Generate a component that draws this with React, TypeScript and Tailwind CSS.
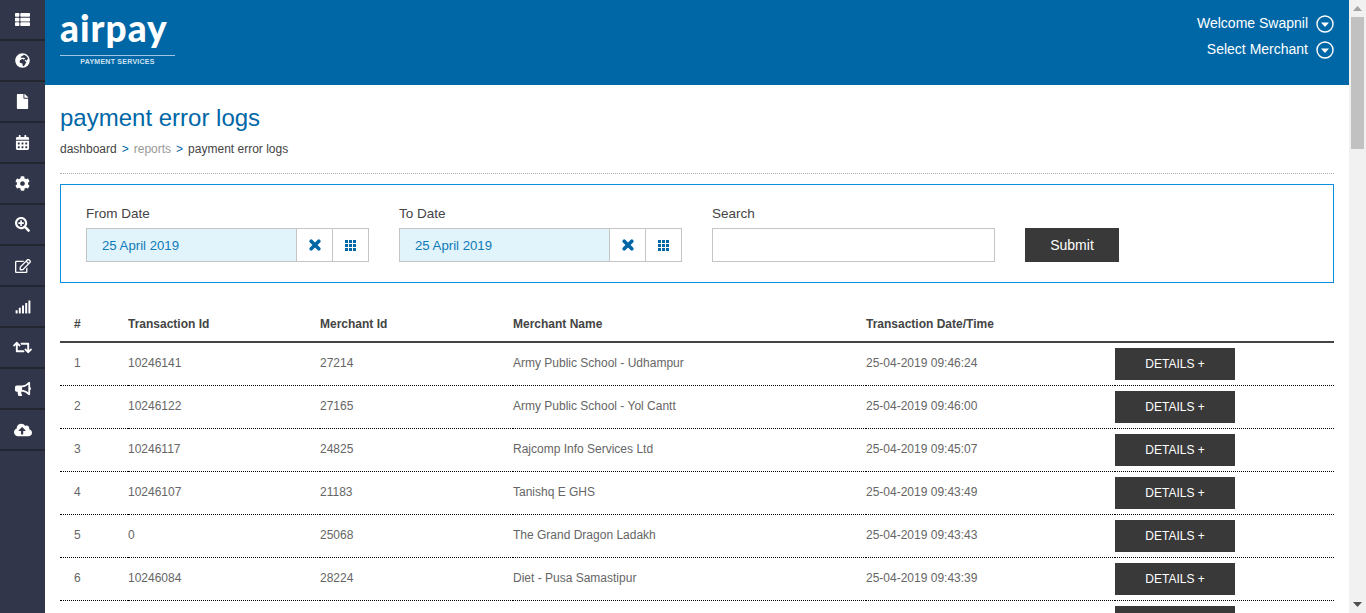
import { FaThList, FaGlobeAfrica, FaFile, FaCalendarAlt, FaCog, FaSearchPlus, FaRegEdit, FaSignal, FaRetweet, FaBullhorn, FaCloudUploadAlt } from 'react-icons/fa';

const navIcons = [
	{ Icon: FaThList, size: 15 },
	{ Icon: FaGlobeAfrica, size: 15 },
	{ Icon: FaFile, size: 15 },
	{ Icon: FaCalendarAlt, size: 15 },
	{ Icon: FaCog, size: 15 },
	{ Icon: FaSearchPlus, size: 15 },
	{ Icon: FaRegEdit, size: 16 },
	{ Icon: FaSignal, size: 16 },
	{ Icon: FaRetweet, size: 19 },
	{ Icon: FaBullhorn, size: 16 },
	{ Icon: FaCloudUploadAlt, size: 18 },
];

const rows = [
	['1', '10246141', '27214', 'Army Public School - Udhampur', '25-04-2019 09:46:24'],
	['2', '10246122', '27165', 'Army Public School - Yol Cantt', '25-04-2019 09:46:00'],
	['3', '10246117', '24825', 'Rajcomp Info Services Ltd', '25-04-2019 09:45:07'],
	['4', '10246107', '21183', 'Tanishq E GHS', '25-04-2019 09:43:49'],
	['5', '0', '25068', 'The Grand Dragon Ladakh', '25-04-2019 09:43:43'],
	['6', '10246084', '28224', 'Diet - Pusa Samastipur', '25-04-2019 09:43:39'],
	['', '', '', '', ''],
];

function CircleArrow() {
	return (
		<svg width="18" height="18" viewBox="0 0 18 18" className="shrink-0">
			<circle cx="9" cy="9" r="8" fill="none" stroke="#fff" strokeWidth="1.4" />
			<path d="M5 7.5h8L9 12z" fill="#fff" />
		</svg>
	);
}

function CrossIcon() {
	return (
		<svg width="12" height="12" viewBox="0 0 12 12">
			<path d="M2.2 2.2l7.6 7.6M9.8 2.2l-7.6 7.6" stroke="#0067a7" strokeWidth="3.6" strokeLinecap="round" />
		</svg>
	);
}

function GridIcon() {
	return (
		<svg width="11" height="11" viewBox="0 0 11 11" fill="#0067a7">
			<rect x="0" y="0" width="3" height="3" />
			<rect x="4" y="0" width="3" height="3" />
			<rect x="8" y="0" width="3" height="3" />
			<rect x="0" y="4" width="3" height="3" />
			<rect x="4" y="4" width="3" height="3" />
			<rect x="8" y="4" width="3" height="3" />
			<rect x="0" y="8" width="3" height="3" />
			<rect x="4" y="8" width="3" height="3" />
			<rect x="8" y="8" width="3" height="3" />
		</svg>
	);
}

function DateField({ label, value }: { label: string; value: string }) {
	return (
		<div className="w-[283px]">
			<div className="text-[13.5px] leading-[15px] mb-[7px] text-[#444]">{label}</div>
			<div className="flex h-[34px] border border-[#c4c4c4]">
				<div className="flex-1 bg-[#e1f4fc] text-[#0f7ab8] text-[13.2px] leading-[33px] pl-[15px]">{value}</div>
				<div className="w-[36px] flex items-center justify-center border-l border-[#c4c4c4]">
					<CrossIcon />
				</div>
				<div className="w-[36px] flex items-center justify-center border-l border-[#c4c4c4]">
					<GridIcon />
				</div>
			</div>
		</div>
	);
}

export default function App() {
	return (
		<div className="flex h-screen overflow-hidden bg-white font-['Liberation_Sans',Arial,sans-serif]">
			{/* Sidebar */}
			<div className="w-[45px] shrink-0 bg-[#31364a]">
				{navIcons.map(({ Icon, size }, i) => (
					<div key={i} className="h-[41px] flex items-center justify-center text-white border-b-2 border-[#23262f]">
						<Icon size={size} />
					</div>
				))}
			</div>

			<div className="flex-1 min-w-0 overflow-hidden">
				{/* Header */}
				<div className="h-[85px] bg-[#0067a7] flex justify-between pl-[15px] pr-[15px]">
					<div className="w-[115px] pt-[6px] text-white">
						<div className="font-['Lato',sans-serif] font-black text-[37px] leading-[44px] tracking-[1px] whitespace-nowrap">airpay</div>
						<div className="border-t border-[#9cc6e2] mt-[5px] text-center text-[7px] leading-[11px] tracking-[0.25px] text-[#cfe2ef] font-bold">PAYMENT SERVICES</div>
					</div>
					<div className="pt-[15px] text-white text-[14px]">
						<div className="flex items-center justify-end gap-[8px] h-[18px]">
							<span className="-mt-[2px]">Welcome Swapnil</span>
							<CircleArrow />
						</div>
						<div className="flex items-center justify-end gap-[8px] h-[18px] mt-[8px]">
							<span className="-mt-[2px]">Select Merchant</span>
							<CircleArrow />
						</div>
					</div>
				</div>

				<div className="px-[15px]">
					<h1 className="text-[24px] leading-[28px] text-[#0067a7] mt-[19px]">payment error logs</h1>
					<div className="text-[12px] leading-[14px] mt-[10px] text-[#444] flex gap-[5px]">
						<span>dashboard</span>
						<span className="text-[#0067a7]">&gt;</span>
						<span className="text-[#999]">reports</span>
						<span className="text-[#0067a7]">&gt;</span>
						<span>payment error logs</span>
					</div>
					<div className="border-b border-dotted border-[#aaa] mt-[17px]" />

					{/* Filters */}
					<div className="mt-[10px] h-[99px] border border-[#0a8ddb] pl-[25px] pt-[21px] flex gap-[30px]">
						<DateField label="From Date" value="25 April 2019" />
						<DateField label="To Date" value="25 April 2019" />
						<div className="w-[283px]">
							<div className="text-[13.5px] leading-[15px] mb-[7px] text-[#444]">Search</div>
							<div className="h-[34px] border border-[#c4c4c4]" />
						</div>
						<div className="pt-[22px]">
							<button className="w-[94px] h-[34px] bg-[#393939] text-white text-[14px]">Submit</button>
						</div>
					</div>

					{/* Table */}
					<table className="w-full table-fixed border-collapse mt-[22px] text-[12px]">
						<colgroup>
							<col className="w-[68px]" />
							<col className="w-[192px]" />
							<col className="w-[193px]" />
							<col className="w-[353px]" />
							<col className="w-[249px]" />
							<col />
						</colgroup>
						<thead>
							<tr className="h-[37px] border-b-2 border-[#444] text-left text-[#444]">
								<th className="pl-[14px] pt-[2px] font-bold">#</th>
								<th className="pt-[2px] font-bold">Transaction Id</th>
								<th className="pt-[2px] font-bold">Merchant Id</th>
								<th className="pt-[2px] font-bold">Merchant Name</th>
								<th className="pt-[2px] font-bold">Transaction Date/Time</th>
								<th />
							</tr>
						</thead>
						<tbody>
							{rows.map((r, i) => (
								<tr key={i} className="h-[43px] border-b border-dotted border-black text-[#666]">
									<td className="pl-[14px] pb-[2px]">{r[0]}</td>
									<td className="pb-[2px]">{r[1]}</td>
									<td className="pb-[2px]">{r[2]}</td>
									<td className="pb-[2px]">{r[3]}</td>
									<td className="pb-[2px]">{r[4]}</td>
									<td>
										<button className="block w-[120px] h-[32px] bg-[#393939] text-white text-[12px]">DETAILS +</button>
									</td>
								</tr>
							))}
						</tbody>
					</table>
				</div>
			</div>

			{/* Scrollbar */}
			<div className="w-[17px] shrink-0 bg-[#f1f1f1] flex flex-col items-center">
				<div className="h-[17px] flex items-center justify-center">
					<svg width="9" height="5" viewBox="0 0 9 5"><path d="M4.5 0L9 5H0z" fill="#a3a3a3" /></svg>
				</div>
				<div className="w-[13px] h-[132px] bg-[#c1c1c1]" />
				<div className="flex-1" />
				<div className="h-[17px] flex items-center justify-center">
					<svg width="9" height="5" viewBox="0 0 9 5"><path d="M0 0h9L4.5 5z" fill="#505050" /></svg>
				</div>
			</div>
		</div>
	);
}
